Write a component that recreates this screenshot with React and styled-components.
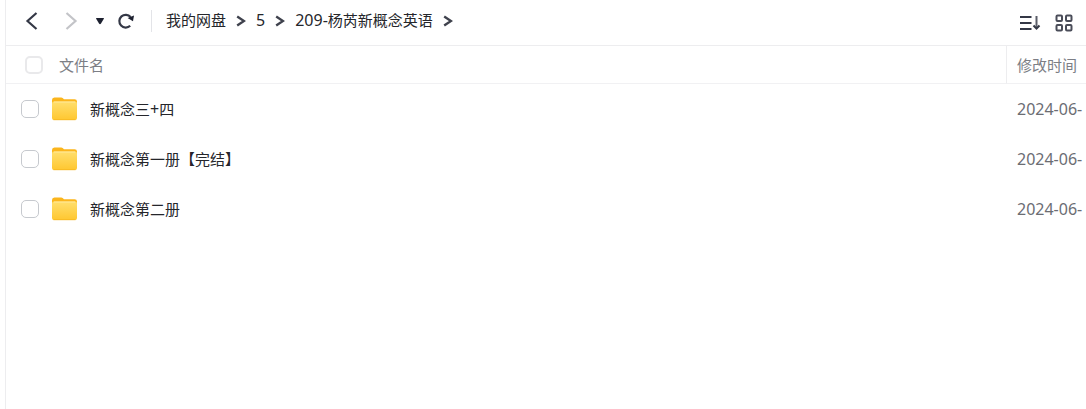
import React from "react";
import styled, { createGlobalStyle } from "styled-components";

const GlobalStyle = createGlobalStyle`
  * {
    box-sizing: border-box;
  }
  body {
    margin: 0;
    background: #fff;
    font-family: "Noto Sans", "Noto Sans CJK SC", sans-serif;
    font-size: 15px;
    color: #25262b;
    overflow: hidden;
  }
`;

const Page = styled.main`
  min-height: 100vh;
  margin-left: 5px;
  border-left: 1px solid #ededef;
`;

const Toolbar = styled.header`
  display: flex;
  align-items: center;
  height: 46px;
  padding: 0 6px 4px 6px;
  border-bottom: 1px solid #ededef;
`;

const IconButton = styled.button`
  display: flex;
  align-items: center;
  justify-content: center;
  width: ${(props) => props.$width || 36}px;
  height: 32px;
  padding: 0;
  border: none;
  background: none;
  color: ${(props) => (props.disabled ? "#c3c4c8" : "#343846")};
  cursor: pointer;
`;

const Divider = styled.div`
  width: 1px;
  height: 22px;
  margin: 0 14px 0 7px;
  background: #e3e4e8;
`;

const Breadcrumb = styled.nav`
  display: flex;
  align-items: center;
  gap: 10px;
  flex: 1;
  line-height: 22px;
  white-space: nowrap;
`;

const Crumb = styled.a`
  padding-bottom: 2px;
  color: #25262b;
  text-decoration: none;
`;

const Latin = styled.span`
  font-size: 16px;
`;

const Tools = styled.div`
  display: flex;
  padding-top: 4px;
`;

const Table = styled.table`
  width: 100%;
  table-layout: fixed;
  border-collapse: separate;
  border-spacing: 0;
`;

const HeadCell = styled.th`
  height: 38px;
  padding: 0 0 0 ${(props) => (props.$date ? 10 : 19)}px;
  border-bottom: 1px solid #f1f1f3;
  border-left: ${(props) => (props.$date ? "1px solid #ededef" : "none")};
  width: ${(props) => (props.$date ? "80px" : "auto")};
  color: #7c7e85;
  font-weight: 400;
  text-align: left;
  white-space: nowrap;
`;

const HeadLabel = styled.label`
  display: flex;
  align-items: center;
  gap: 16px;
  line-height: 22px;
`;

const NameCell = styled.td`
  height: 50px;
  padding: 0 0 0 15px;
`;

const NameLabel = styled.label`
  display: flex;
  align-items: center;
  gap: 13px;
  line-height: 22px;
`;

const DateCell = styled.td`
  padding: 0 0 0 11px;
  color: #6b6d73;
  font-size: 16px;
  line-height: 22px;
  white-space: nowrap;
  overflow: hidden;
`;

const Checkbox = styled.input`
  appearance: none;
  flex: none;
  width: 18px;
  height: 18px;
  margin: 0;
  border: ${(props) => (props.$muted ? "2px solid #e9e9eb" : "1px solid #c6c9ce")};
  border-radius: 5px;
  background: #fff;

  &:checked {
    background: #5b6be8;
  }
`;

const BackIcon = () => (
  <svg width="14" height="20" viewBox="0 0 14 20" fill="none" stroke="currentColor" strokeWidth="2.2">
    <path d="M11.5 2L2.5 10L11.5 18" />
  </svg>
);

const ForwardIcon = () => (
  <svg width="14" height="20" viewBox="0 0 14 20" fill="none" stroke="currentColor" strokeWidth="2.2">
    <path d="M1.5 2L10.5 10L1.5 18" />
  </svg>
);

const CaretIcon = () => (
  <svg width="8" height="8" viewBox="0 0 8 8" fill="#1d2130">
    <path d="M0 1.5Q0 1 0.5 1H7.5Q8 1 8 1.5L5 6.6Q4 7.8 3 6.6Z" />
  </svg>
);

const RefreshIcon = () => (
  <svg width="18" height="18" viewBox="0 0 18 18" fill="none">
    <path d="M13.2 13.8A6.4 6.4 0 1 1 13.6 5" stroke="currentColor" strokeWidth="2.2" />
    <path d="M10.6 6L17 3.4L16 9.2Z" fill="#1d2130" />
  </svg>
);

const Chevron = () => (
  <svg width="10" height="12" viewBox="0 0 10 12" fill="none" stroke="#3f424d" strokeWidth="2.4">
    <path d="M1.2 1.5L8 6L1.2 10.5" />
  </svg>
);

const SortIcon = () => (
  <svg width="22" height="16" viewBox="0 0 22 16" fill="none" stroke="currentColor" strokeWidth="2">
    <path d="M1 2H12.5M1 8H12.5M1 14H12.5" />
    <path d="M17.5 1V13" stroke="#5a5d68" />
    <path d="M14.5 10.5L17.5 13.6L20.5 10.5" />
  </svg>
);

const GridIcon = () => (
  <svg width="18" height="18" viewBox="0 0 18 18" fill="none" stroke="#4a4d59" strokeWidth="2">
    <rect x="1.5" y="1.5" width="5.5" height="5.5" rx="1" />
    <rect x="11" y="1.5" width="5.5" height="5.5" rx="1" />
    <rect x="1.5" y="11" width="5.5" height="5.5" rx="1" />
    <rect x="11" y="11" width="5.5" height="5.5" rx="1" />
  </svg>
);

const FolderIcon = () => (
  <svg width="25" height="24" viewBox="0 0 26 24" preserveAspectRatio="none">
    <defs>
      <linearGradient id="folder" x1="0" y1="0" x2="0" y2="1">
        <stop offset="0" stopColor="#ffdf6e" />
        <stop offset="1" stopColor="#ffc730" />
      </linearGradient>
    </defs>
    <path d="M0 3Q0 0.5 2.5 0.5H9.5Q10.6 0.5 11.4 1.3L12.4 2.2H23.5Q26 2.2 26 4.5V14H0Z" fill="#fbb51c" />
    <rect x="0" y="4.5" width="26" height="18.5" rx="2" fill="url(#folder)" />
    <path d="M2 5H24" stroke="#ffe99c" strokeWidth="1" />
    <path d="M1.5 22.7H24.5" stroke="#f8b923" strokeWidth="1" />
  </svg>
);

const files = [
  {
    id: 1,
    name: (
      <>
        新概念三<Latin>+</Latin>四
      </>
    ),
    date: "2024-06-",
  },
  { id: 2, name: "新概念第一册【完结】", date: "2024-06-" },
  { id: 3, name: "新概念第二册", date: "2024-06-" },
];

const App = () => {
  return (
    <>
      <GlobalStyle />
      <Page>
        <Toolbar>
          <IconButton $width={40} aria-label="后退">
            <BackIcon />
          </IconButton>
          <IconButton $width={40} aria-label="前进" disabled>
            <ForwardIcon />
          </IconButton>
          <IconButton $width={16} aria-label="历史记录">
            <CaretIcon />
          </IconButton>
          <IconButton aria-label="刷新">
            <RefreshIcon />
          </IconButton>
          <Divider />
          <Breadcrumb>
            <Crumb href="#">我的网盘</Crumb>
            <Chevron />
            <Crumb href="#">
              <Latin>5</Latin>
            </Crumb>
            <Chevron />
            <Crumb href="#">
              <Latin>209-</Latin>杨芮新概念英语
            </Crumb>
            <Chevron />
          </Breadcrumb>
          <Tools>
            <IconButton aria-label="排序">
              <SortIcon />
            </IconButton>
            <IconButton $width={32} aria-label="网格视图">
              <GridIcon />
            </IconButton>
          </Tools>
        </Toolbar>
        <Table>
          <thead>
            <tr>
              <HeadCell>
                <HeadLabel>
                  <Checkbox type="checkbox" $muted />
                  文件名
                </HeadLabel>
              </HeadCell>
              <HeadCell $date>修改时间</HeadCell>
            </tr>
          </thead>
          <tbody>
            {files.map((file) => (
              <tr key={file.id}>
                <NameCell>
                  <NameLabel>
                    <Checkbox type="checkbox" />
                    <FolderIcon />
                    <span>{file.name}</span>
                  </NameLabel>
                </NameCell>
                <DateCell>{file.date}</DateCell>
              </tr>
            ))}
          </tbody>
        </Table>
      </Page>
    </>
  );
};

export default App;
